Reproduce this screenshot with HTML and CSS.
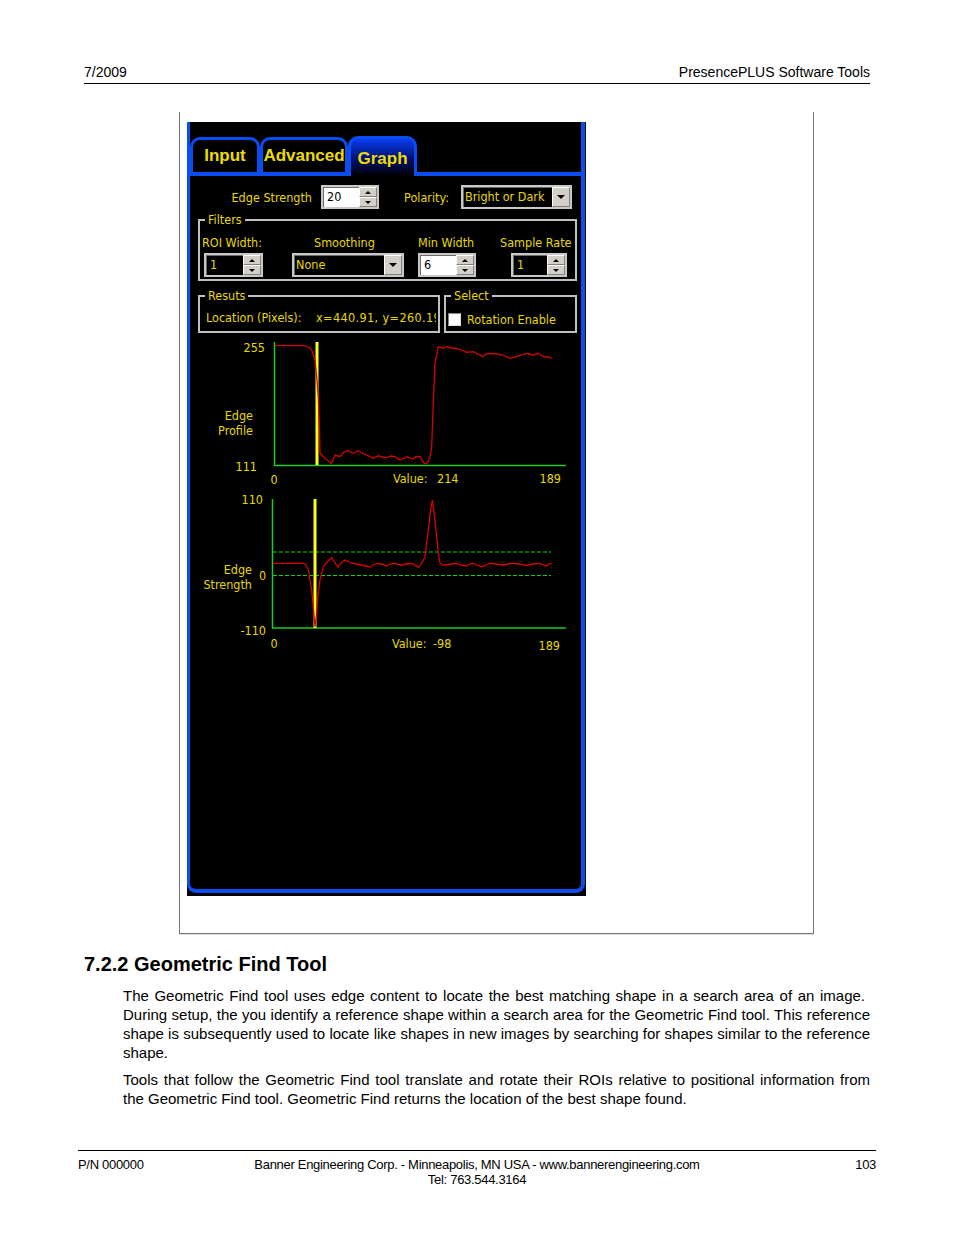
FILE: index.html
```html
<!DOCTYPE html>
<html lang="en">
<head>
    <meta charset="UTF-8">
    <title>PresencePLUS Software Tools - 7.2.2 Geometric Find Tool</title>
    <link rel="stylesheet" href="styles.css">
</head>
<body>
<div class="page">
    <div class="top">
        <span>7/2009</span>
        <span>PresencePLUS Software Tools</span>
    </div>

    <div class="figure">
        <div class="shot">
            <div class="win">
                <div class="tabs">
                    <div class="tab t-input">Input</div>
                    <div class="tab t-adv">Advanced</div>
                    <div class="tab t-graph">Graph</div>
                </div>

                <div class="row1">
                    <span class="lbl-es">Edge Strength</span>
                    <div class="spin light w58"><span class="val">20</span><span class="arrows"><i class="up"></i><i class="dn"></i></span></div>
                    <span class="lbl-pol">Polarity:</span>
                    <div class="combo w111"><span class="val">Bright or Dark</span><span class="btn"></span></div>
                </div>

                <fieldset class="group filters">
                    <legend>Filters</legend>
                    <div class="cols">
                        <div class="col c1">
                            <span class="cap">ROI Width:</span>
                            <div class="spin dark"><span class="val">1</span><span class="arrows"><i class="up"></i><i class="dn"></i></span></div>
                        </div>
                        <div class="col c2">
                            <span class="cap">Smoothing</span>
                            <div class="combo"><span class="val">None</span><span class="btn"></span></div>
                        </div>
                        <div class="col c3">
                            <span class="cap">Min Width</span>
                            <div class="spin light"><span class="val">6</span><span class="arrows"><i class="up"></i><i class="dn"></i></span></div>
                        </div>
                        <div class="col c4">
                            <span class="cap">Sample Rate</span>
                            <div class="spin dark"><span class="val">1</span><span class="arrows"><i class="up"></i><i class="dn"></i></span></div>
                        </div>
                    </div>
                </fieldset>

                <div class="row3">
                    <fieldset class="group results">
                        <legend>Resuts</legend>
                        <div class="loc"><span class="loc-k">Location (Pixels):</span><span class="loc-v">x=440.91, y=260.19</span></div>
                    </fieldset>
                    <fieldset class="group select">
                        <legend>Select</legend>
                        <div class="chk"><span class="box"></span>Rotation Enable</div>
                    </fieldset>
                </div>

                <!-- graphs drawn in page coordinates -->
                <svg class="graphs" width="391" height="325" viewBox="190 335 391 325">
                    <g class="axis">
                        <line x1="274.5" y1="342" x2="274.5" y2="466"/>
                        <line x1="274" y1="465.5" x2="566" y2="465.5"/>
                        <line x1="272.5" y1="499" x2="272.5" y2="628.5"/>
                        <line x1="272" y1="628" x2="566" y2="628"/>
                        <line class="dash" x1="273" y1="552" x2="551" y2="552"/>
                        <line class="dash" x1="273" y1="575.5" x2="551" y2="575.5"/>
                    </g>
                    <g class="marker">
                        <line x1="317" y1="342" x2="317" y2="465"/>
                        <line x1="315" y1="499" x2="315" y2="628"/>
                    </g>
                    <polyline class="curve" points="275,345.7 303,345.7 308,346.5 311.7,350 315,360 317,380 318.3,396.7 319.5,430 320,453 323.3,456.7 327,460 331.7,463.3 335,455 340,456.7 344,452 348.3,450.7 353.3,453.3 358.3,450.7 362,453 366.7,455 373.3,458.3 378.3,455.7 382,457 386.7,457.7 391,456 395,456.7 400,460 406.7,456.7 413.3,459 416,456.5 420,456.7 423,462 425,464 428,462 430,456.7 431.7,446.7 433,410 435,363.3 438.3,346.7 443.3,348.3 446.7,346.7 451,348 456.7,348.3 461,350 466.7,352.3 473.3,351.7 478,354 483.3,356.7 486,354 490,353.3 495,354 500,354.3 505,356 510,358.3 516.7,356.7 521,355 526.7,353.3 533.3,355 538.3,353.3 543.3,356.7 548,357 551.7,358.3"/>
                    <polyline class="curve" points="273.3,563.3 303.3,563.3 306,565 308.3,570 311.7,590 313.5,610 315,626.7 316.7,613.3 318,595 320,580 323.3,566.7 327,562 331.7,557.7 335,563 338.3,567.3 341,563 345,560 349,562 353.3,563.3 357,564 361.7,565 366,566 370,567.3 373,565 376.7,563.3 381,564 386.7,566 390,564 393.3,563.3 397,564 401.7,565 406,564 411.7,563.3 415,565 418.3,567.3 422,563 425,556.7 428.3,530 430.5,510 432.3,500 434,512 436,530 438,550 440,563.3 443,565 446.7,565 451,564 456.7,563.3 461,565 466.7,566 470,564 473.3,563.3 477,565 481.7,566.7 486,565 490,563.3 496,564 503.3,565 508,564 513.3,563.3 519,564 526.7,565.3 533,564 540,563.3 543,565 546.7,566 549,564 551.7,563.3"/>
                    <g class="txt">
                        <text x="265" y="352" text-anchor="end">255</text>
                        <text x="257" y="471" text-anchor="end">111</text>
                        <text x="253" y="420" text-anchor="end">Edge</text>
                        <text x="253" y="435" text-anchor="end">Profile</text>
                        <text x="270.5" y="484">0</text>
                        <text x="393" y="483">Value:</text>
                        <text x="437" y="483">214</text>
                        <text x="561" y="483" text-anchor="end">189</text>

                        <text x="263" y="504" text-anchor="end">110</text>
                        <text x="252" y="574" text-anchor="end">Edge</text>
                        <text x="252" y="589" text-anchor="end">Strength</text>
                        <text x="259" y="580">0</text>
                        <text x="266" y="635" text-anchor="end">-110</text>
                        <text x="270.5" y="648">0</text>
                        <text x="392" y="648">Value:</text>
                        <text x="433" y="648">-98</text>
                        <text x="560" y="650" text-anchor="end">189</text>
                    </g>
                </svg>
            </div>
        </div>
    </div>

    <h2 class="title">7.2.2 Geometric Find Tool</h2>
    <div class="body">
        <p>
            <span class="ln first">The Geometric Find tool uses edge content to locate the best matching shape in a search area of an image.</span>
            <span class="ln">During setup, the you identify a reference shape within a search area for the Geometric Find tool. This reference</span>
            <span class="ln">shape is subsequently used to locate like shapes in new images by searching for shapes similar to the reference</span>
            shape.
        </p>
        <p>
            <span class="ln">Tools that follow the Geometric Find tool translate and rotate their ROIs relative to positional information from</span>
            the Geometric Find tool. Geometric Find returns the location of the best shape found.
        </p>
    </div>

    <div class="foot">
        <span>P/N 000000</span>
        <span class="foot-mid">Banner Engineering Corp. - Minneapolis, MN USA - www.bannerengineering.com<br>Tel: 763.544.3164</span>
        <span class="foot-r">103</span>
    </div>
</div>
</body>
</html>
```

FILE: styles.css
```css
*{
    margin: 0;
    padding: 0;
    box-sizing: border-box;
}
body{
    font-family: "Liberation Sans", Arial, sans-serif;
    color: #000;
    background: #fff;
}
.page{
    width: 954px;
    height: 1235px;
    overflow: hidden;
}
.top{
    display: flex;
    justify-content: space-between;
    margin: 0 84px;
    padding: 64px 0 3px;
    border-bottom: 1px solid #000;
    font-size: 14px;
    line-height: 16px;
}

/* frame round the screenshot */
.figure{
    margin: 28px 0 0 179px;
    width: 635px;
    border: 1px solid #777;
    border-top: 0;
    padding: 10px 0 37px 7px;
    box-shadow: 0 1px 0 #ddd;
}
.shot{
    width: 399px;
    height: 774px;
    background: #000;
}
.win{
    width: 398px;
    height: 771px;
    border: solid #0a4ef2;
    border-width: 0 4px 4px 3px;
    border-radius: 0 0 9px 9px;
    padding-top: 14px;
    font-family: "DejaVu Sans Condensed", "DejaVu Sans", sans-serif;
    font-size: 12.5px;
    color: #e8d800;
}

/* tabs */
.tabs{
    display: flex;
    align-items: flex-end;
    border-bottom: 4px solid #0a4ef2;
}
.tab{
    height: 35px;
    border: 3px solid #0a4ef2;
    border-bottom: 0;
    border-radius: 10px 10px 0 0;
    padding-top: 6px;
    text-align: center;
    font-family: "Liberation Sans", Arial, sans-serif;
    font-weight: bold;
    font-size: 17px;
    line-height: 20px;
    color: #ecdc00;
}
.t-input{ width: 70px; }
.t-adv{ width: 88px; }
.t-graph{
    width: 69px;
    height: 40px;
    margin-bottom: -4px;
    padding-top: 10px;
    background: linear-gradient(#0a3cf0, #001070 55%, #000 100%);
}

/* first row */
.row1{
    display: flex;
    align-items: center;
    height: 24px;
    margin-top: 9px;
}
.lbl-es{
    width: 131px;
    padding-right: 9px;
    text-align: right;
}
.lbl-pol{
    width: 82px;
    padding-right: 12px;
    text-align: right;
}
.w58{ width: 58px; }
.w111{ width: 111px; }

/* spin boxes and combos */
.spin, .combo{
    display: flex;
    height: 24px;
    border: 2px solid #c8c8c8;
    box-shadow: inset 1px 1px 0 #6a6a6a;
    background: #000;
}
.spin .val{
    flex: 1;
    padding-left: 4px;
    line-height: 20px;
}
.spin.light{
    background: #fff;
    color: #000;
}
.arrows{
    width: 18px;
    display: flex;
    flex-direction: column;
}
.arrows i{
    flex: 1;
    display: flex;
    align-items: center;
    justify-content: center;
    background: #d4d0c8;
    border: 1px solid;
    border-color: #fff #808080 #808080 #fff;
}
.arrows i::after{
    content: "";
    border-left: 3px solid transparent;
    border-right: 3px solid transparent;
}
.arrows .up::after{ border-bottom: 3px solid #000; }
.arrows .dn::after{ border-top: 3px solid #000; }
.combo .val{
    flex: 1;
    padding-left: 2px;
    line-height: 20px;
    white-space: nowrap;
}
.combo .btn{
    width: 18px;
    display: flex;
    align-items: center;
    justify-content: center;
    background: #d4d0c8;
    border: 1px solid;
    border-color: #fff #808080 #808080 #fff;
}
.combo .btn::after{
    content: "";
    border-left: 4px solid transparent;
    border-right: 4px solid transparent;
    border-top: 4px solid #000;
}

/* group boxes */
.group{
    border: 2px solid #c0c0c0;
    padding: 0 2px;
    min-width: 0;
}
.group legend{
    margin-left: 3px;
    padding: 0 3px;
    line-height: 14px;
}
.filters{
    width: 379px;
    margin: 4px 0 0 8px;
    padding: 8px 2px 2px;
}
.cols{
    display: flex;
}
.col{
    display: flex;
    flex-direction: column;
}
.cap{
    line-height: 15px;
    margin-bottom: 3px;
    white-space: nowrap;
}
.c1{ width: 61px; }
.c1 .spin{ width: 59px; margin-left: 2px; }
.c2{ width: 112px; margin-left: 29px; }
.c2 .cap{ padding-left: 22px; }
.c3{ width: 58px; margin-left: 14px; }
.c4{ width: 70px; margin-left: 24px; }
.c4 .spin{ width: 56px; margin-left: 11px; }

.row3{
    display: flex;
    gap: 4px;
    margin: 8px 0 0 8px;
}
.results{
    width: 242px;
    padding: 7px 2px 6px;
}
.loc{
    line-height: 15px;
    padding-left: 4px;
    white-space: nowrap;
    overflow: hidden;
}
.loc-k{
    display: inline-block;
    width: 110px;
}
.loc-v{
    letter-spacing: 0.4px;
}
.select{
    width: 133px;
    padding: 9px 2px 4px;
}
.chk{
    display: flex;
    align-items: center;
    gap: 6px;
    line-height: 15px;
}
.chk .box{
    width: 13px;
    height: 13px;
    background: #fff;
    border: 1px solid;
    border-color: #808080 #e0e0e0 #e0e0e0 #808080;
}

/* graphs */
.graphs{
    display: block;
    margin-top: 2px;
}
.axis line{
    stroke: #1ccc1c;
    stroke-width: 1.5;
}
.axis .dash{
    stroke-width: 1;
    stroke-dasharray: 4 2;
}
.marker line{
    stroke: #ffff10;
    stroke-width: 3;
}
.curve{
    fill: none;
    stroke: #dc0000;
    stroke-width: 1.3;
}
.txt text{
    fill: #e8d800;
    font-family: "DejaVu Sans Condensed", "DejaVu Sans", sans-serif;
    font-size: 12.5px;
}

/* document text */
.title{
    margin: 18px 0 0 84px;
    font-size: 20px;
    line-height: 24px;
    font-weight: bold;
}
.body{
    width: 747px;
    margin: 10px 0 0 123px;
    font-size: 15px;
    line-height: 19px;
}
.body p + p{
    margin-top: 8px;
}
.ln{
    display: block;
    text-align: justify;
    text-align-last: justify;
}
.ln.first{
    width: 742px;
}
.foot{
    display: grid;
    grid-template-columns: 1fr auto 1fr;
    width: 798px;
    margin: 42px 0 0 78px;
    padding-top: 6px;
    border-top: 1px solid #000;
    font-size: 13px;
    line-height: 15px;
    letter-spacing: -0.3px;
}
.foot-mid{
    text-align: center;
}
.foot-r{
    text-align: right;
}
```
